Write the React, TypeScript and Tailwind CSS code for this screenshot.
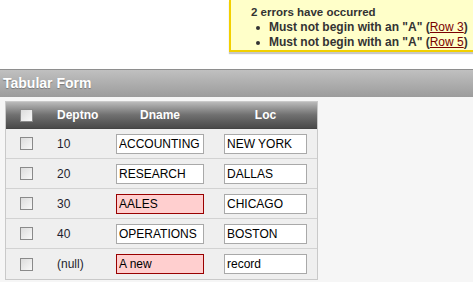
const rows = [
  { deptno: "10", dname: "ACCOUNTING", loc: "NEW YORK", error: false },
  { deptno: "20", dname: "RESEARCH", loc: "DALLAS", error: false },
  { deptno: "30", dname: "AALES", loc: "CHICAGO", error: true },
  { deptno: "40", dname: "OPERATIONS", loc: "BOSTON", error: false },
  { deptno: "(null)", dname: "A new", loc: "record", error: true },
];

const errors = ["Row 3", "Row 5"];

function Checkbox() {
  return (
    <span className="block w-[13px] h-[13px] border border-[#8a8a8a] bg-gradient-to-br from-[#dcdcdc] to-[#f8f8f8] shrink-0" />
  );
}

export default function App() {
  return (
    <div className="w-[473px] h-[282px] bg-white overflow-hidden font-['Liberation_Sans',Arial,sans-serif]">
      <div className="h-[69px] flex justify-end items-start">
        <div className="w-[244px] h-[52px] border-l-2 border-b-2 border-[#f2d000] bg-[#ffffc9] shadow-[0_2px_1px_#c8c8c8] pl-[20px] pt-[5px] text-[#333]">
          <div className="text-[11.5px] font-bold leading-[15px]">2 errors have occurred</div>
          <ul className="text-[12px] leading-[15px] font-bold">
            {errors.map((r) => (
              <li key={r} className="flex items-center">
                <span className="w-[4px] h-[4px] rounded-full bg-[#333] ml-[5px] mr-[9px]" />
                <span>
                  Must not begin with an "A" (
                  <a href="#" className="text-[#7a0000] underline font-normal">{r}</a>)
                </span>
              </li>
            ))}
          </ul>
        </div>
      </div>

      <div className="h-[28px] border-t border-[#8e8e8e] bg-gradient-to-b from-[#c0c0c0] to-[#9c9c9c] flex items-center pl-[3px]">
        <span className="text-white font-bold text-[14px] [text-shadow:0_1px_1px_#777]">Tabular Form</span>
      </div>

      <div className="bg-[#f6f6f6] h-[185px] pt-[4px] pl-[5px]">
        <div className="w-[313px] border border-[#c9c9c9] bg-[#efefef]">
          <div className="h-[27px] flex items-center bg-gradient-to-b from-[#bababa] via-[#707070] to-[#4a4a4a] text-white font-bold text-[12px] border-b border-[#444]">
            <div className="pl-[14px]"><Checkbox /></div>
            <div className="ml-[24px] w-[59px]">Deptno</div>
            <div className="w-[88px] text-center">Dname</div>
            <div className="ml-[20px] w-[83px] text-center">Loc</div>
          </div>
          {rows.map((r, i) => (
            <div
              key={r.deptno}
              className={`h-[30px] flex items-center text-[12px] text-[#1e1e2e] ${i < rows.length - 1 ? "border-b border-[#d2d2d2]" : ""}`}
            >
              <div className="pl-[14px]"><Checkbox /></div>
              <div className="ml-[24px] w-[59px]">{r.deptno}</div>
              <input
                readOnly
                value={r.dname}
                className={`w-[88px] h-[20px] px-[2px] text-[12px] text-black outline-none border ${r.error ? "bg-[#ffcfcf] border-[#990000]" : "bg-white border-[#a9a9a9]"}`}
              />
              <input
                readOnly
                value={r.loc}
                className="ml-[20px] w-[83px] h-[20px] px-[2px] text-[12px] text-black outline-none border bg-white border-[#a9a9a9]"
              />
            </div>
          ))}
        </div>
      </div>
    </div>
  );
}
